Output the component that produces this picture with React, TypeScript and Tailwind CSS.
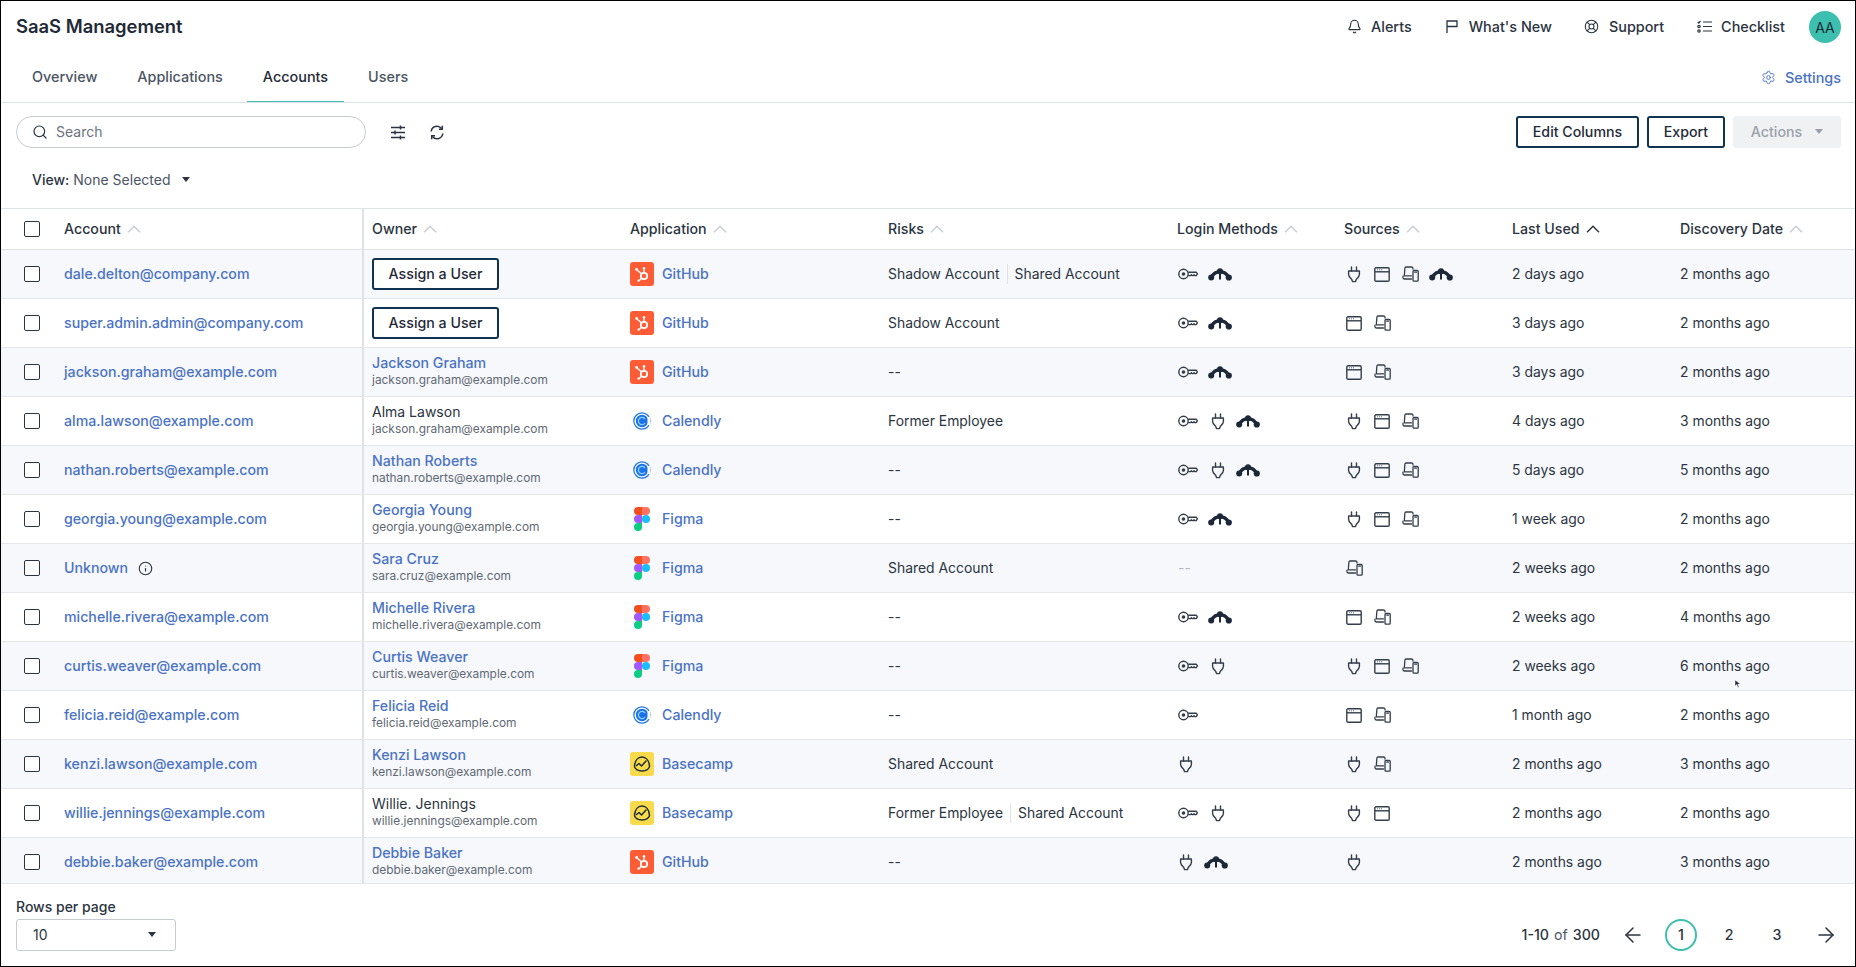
import React from 'react';
import { Bell, LifeBuoy, Settings, Search, ArrowLeft, ArrowRight, Info } from 'lucide-react';

type IconName = 'key' | 'okta' | 'plug' | 'browser' | 'devices';
type AppName = 'GitHub' | 'Calendly' | 'Figma' | 'Basecamp';

interface Row {
  account: string;
  owner?: string;
  ownerEmail?: string;
  ownerLink?: boolean;
  app: AppName;
  risks: string[];
  login: IconName[];
  sources: IconName[];
  lastUsed: string;
  discovery: string;
}

const rows: Row[] = [
  { account: 'dale.delton@company.com', app: 'GitHub', risks: ['Shadow Account', 'Shared Account'], login: ['key', 'okta'], sources: ['plug', 'browser', 'devices', 'okta'], lastUsed: '2 days ago', discovery: '2 months ago' },
  { account: 'super.admin.admin@company.com', app: 'GitHub', risks: ['Shadow Account'], login: ['key', 'okta'], sources: ['browser', 'devices'], lastUsed: '3 days ago', discovery: '2 months ago' },
  { account: 'jackson.graham@example.com', owner: 'Jackson Graham', ownerEmail: 'jackson.graham@example.com', ownerLink: true, app: 'GitHub', risks: [], login: ['key', 'okta'], sources: ['browser', 'devices'], lastUsed: '3 days ago', discovery: '2 months ago' },
  { account: 'alma.lawson@example.com', owner: 'Alma Lawson', ownerEmail: 'jackson.graham@example.com', app: 'Calendly', risks: ['Former Employee'], login: ['key', 'plug', 'okta'], sources: ['plug', 'browser', 'devices'], lastUsed: '4 days ago', discovery: '3 months ago' },
  { account: 'nathan.roberts@example.com', owner: 'Nathan Roberts', ownerEmail: 'nathan.roberts@example.com', ownerLink: true, app: 'Calendly', risks: [], login: ['key', 'plug', 'okta'], sources: ['plug', 'browser', 'devices'], lastUsed: '5 days ago', discovery: '5 months ago' },
  { account: 'georgia.young@example.com', owner: 'Georgia Young', ownerEmail: 'georgia.young@example.com', ownerLink: true, app: 'Figma', risks: [], login: ['key', 'okta'], sources: ['plug', 'browser', 'devices'], lastUsed: '1 week ago', discovery: '2 months ago' },
  { account: 'Unknown', owner: 'Sara Cruz', ownerEmail: 'sara.cruz@example.com', ownerLink: true, app: 'Figma', risks: ['Shared Account'], login: [], sources: ['devices'], lastUsed: '2 weeks ago', discovery: '2 months ago' },
  { account: 'michelle.rivera@example.com', owner: 'Michelle Rivera', ownerEmail: 'michelle.rivera@example.com', ownerLink: true, app: 'Figma', risks: [], login: ['key', 'okta'], sources: ['browser', 'devices'], lastUsed: '2 weeks ago', discovery: '4 months ago' },
  { account: 'curtis.weaver@example.com', owner: 'Curtis Weaver', ownerEmail: 'curtis.weaver@example.com', ownerLink: true, app: 'Figma', risks: [], login: ['key', 'plug'], sources: ['plug', 'browser', 'devices'], lastUsed: '2 weeks ago', discovery: '6 months ago' },
  { account: 'felicia.reid@example.com', owner: 'Felicia Reid', ownerEmail: 'felicia.reid@example.com', ownerLink: true, app: 'Calendly', risks: [], login: ['key'], sources: ['browser', 'devices'], lastUsed: '1 month ago', discovery: '2 months ago' },
  { account: 'kenzi.lawson@example.com', owner: 'Kenzi Lawson', ownerEmail: 'kenzi.lawson@example.com', ownerLink: true, app: 'Basecamp', risks: ['Shared Account'], login: ['plug'], sources: ['plug', 'devices'], lastUsed: '2 months ago', discovery: '3 months ago' },
  { account: 'willie.jennings@example.com', owner: 'Willie. Jennings', ownerEmail: 'willie.jennings@example.com', app: 'Basecamp', risks: ['Former Employee', 'Shared Account'], login: ['key', 'plug'], sources: ['plug', 'browser'], lastUsed: '2 months ago', discovery: '2 months ago' },
  { account: 'debbie.baker@example.com', owner: 'Debbie Baker', ownerEmail: 'debbie.baker@example.com', ownerLink: true, app: 'GitHub', risks: [], login: ['plug', 'okta'], sources: ['plug'], lastUsed: '2 months ago', discovery: '3 months ago' },
];

const gridCols = 'grid grid-cols-[63px_298px_268px_258px_289px_167px_168px_168px_1fr]';

const KeyIcon = () => (
  <svg width="20" height="12" viewBox="0 0 20 12" fill="none" stroke="#343d4a" strokeWidth="1.4" strokeLinejoin="round">
    <circle cx="5.5" cy="6" r="4.7" />
    <circle cx="5.5" cy="6" r="1.1" fill="#343d4a" />
    <path d="M10.200 4.200h8l1.200 1.600-1.200 1.800h-1.400l-.8-.9-.8.9h-1l-.8-.9-.8.9h-2.400" />
  </svg>
);

const OktaIcon = () => (
  <svg width="24" height="13" viewBox="0 0 24 13" className="-ml-[2px]" fill="#1c2738" stroke="#1c2738">
    <path d="M3.500 9C5.500 5.500 8.500 3.800 12 3.800S18.500 5.500 20.500 9" fill="none" strokeWidth="3.400" />
    <path d="M12 4v7.500" strokeWidth="2" />
    <circle cx="3.200" cy="9.500" r="3" stroke="none" />
    <circle cx="20.800" cy="9.500" r="3.100" stroke="none" />
    <circle cx="12" cy="3.200" r="3" stroke="none" />
  </svg>
);

const PlugIcon = () => (
  <svg width="16" height="17" viewBox="0 0 16 17" fill="none" stroke="#343d4a" strokeWidth="1.4" strokeLinejoin="round" strokeLinecap="round">
    <path d="M5.500 1v4M10.500 1v4" />
    <path d="M2.600 5h10.800v3.500c0 2.200-2 3.600-3.200 5l-.7 2.100H6.500l-.7-2.100C4.600 12.100 2.600 10.700 2.600 8.500z" />
  </svg>
);

const BrowserIcon = () => (
  <svg width="16" height="15" viewBox="0 0 16 15" fill="none" stroke="#343d4a" strokeWidth="1.4">
    <rect x="0.8" y="0.800" width="14.400" height="13.400" rx="1.200" />
    <path d="M1 4.800h14" />
    <path d="M3 2.800h.8M5 2.800h.8M7 2.800h.8" strokeWidth="1" />
  </svg>
);

const DevicesIcon = () => (
  <svg width="17" height="16" viewBox="0 0 17 16" fill="none" stroke="#343d4a" strokeWidth="1.3" strokeLinejoin="round" strokeLinecap="round">
    <path d="M11 3C11 1.500 10.500 1 9.500 1H4C3.300 1 3 1.400 2.900 2L2.300 9.800H9.500" />
    <path d="M1 10.200C.8 12 1.200 13 2.200 13H9.500" />
    <rect x="11" y="4.500" width="5.200" height="10.700" rx="1" />
    <path d="M12.800 6.200h1.600" />
  </svg>
);

const icons: Record<IconName, React.FC> = {
  key: KeyIcon,
  okta: OktaIcon,
  plug: PlugIcon,
  browser: BrowserIcon,
  devices: DevicesIcon,
};

const AppLogo = ({ app }: { app: AppName }) => {
  if (app === 'GitHub') {
    return (
      <div className="flex h-6 w-6 items-center justify-center rounded-[3px] bg-[#ff5c35]">
        <svg width="18" height="18" viewBox="0 0 18 18" fill="none" stroke="white">
          <circle cx="11" cy="11" r="3.200" strokeWidth="1.800" />
          <path d="M11 7.500V4M8.500 8.700 4 5M8.600 13.200l-2.400 2.300" strokeWidth="1.400" />
          <circle cx="3.600" cy="4.400" r="1.400" fill="white" stroke="none" />
          <circle cx="11" cy="3.200" r="1.200" fill="white" stroke="none" />
          <circle cx="5.600" cy="15.600" r="1.200" fill="white" stroke="none" />
        </svg>
      </div>
    );
  }
  if (app === 'Calendly') {
    return (
      <div className="flex h-6 w-6 items-center justify-center">
        <svg width="18" height="18" viewBox="0 0 18 18" fill="none">
          <circle cx="9" cy="9" r="8.200" stroke="#1a73e8" strokeWidth="1.200" />
          <circle cx="9" cy="9" r="6.200" fill="#1a73e8" />
          <path d="M12 7a3.600 3.600 0 1 0 0 4" stroke="#8fd0f5" strokeWidth="1.300" />
          <path d="M14.500 5.500 17.500 4v10l-3-1.500z" fill="white" />
        </svg>
      </div>
    );
  }
  if (app === 'Figma') {
    return (
      <div className="flex h-6 w-6 items-center justify-center">
        <svg width="16" height="24" viewBox="0 0 16 24">
          <path d="M8 0H4a4 4 0 0 0 0 8h4z" fill="#f24e1e" />
          <path d="M8 0h4a4 4 0 0 1 0 8H8z" fill="#ff7262" />
          <path d="M8 8H4a4 4 0 0 0 0 8h4z" fill="#a259ff" />
          <circle cx="12" cy="12" r="4" fill="#1abcfe" />
          <path d="M4 16h4v4a4 4 0 1 1-4-4z" fill="#0acf83" />
        </svg>
      </div>
    );
  }
  return (
    <div className="flex h-6 w-6 items-center justify-center rounded-[3px] bg-[#f8da4a]">
      <svg width="18" height="16" viewBox="0 0 18 16" fill="none" stroke="#1d2d35" strokeWidth="1.500" strokeLinecap="round" strokeLinejoin="round">
        <path d="M1.500 10C2 4.500 5 1 9 1s7 3.500 7.500 9c.2 3-3.500 5-7.500 5s-7.700-2-7.500-5z" />
        <path d="M3.500 9.500 6 7.500l2.500 2.500L13 5" />
      </svg>
    </div>
  );
};

const SortArrow = ({ active }: { active?: boolean }) => (
  <svg width="14" height="8" viewBox="0 0 14 8" fill="none" stroke={active ? '#2b3440' : '#c9cdd3'} strokeWidth="1.400">
    <path d="M1 7.300 7 1.300l6 6" />
  </svg>
);

const Caret = ({ color = '#2b3440' }: { color?: string }) => (
  <svg width="8" height="5" viewBox="0 0 8 5" fill={color}>
    <path d="M0 0h8L4 5z" />
  </svg>
);

const TopLink = ({ icon, label }: { icon: React.ReactNode; label: string }) => (
  <div className="flex items-center gap-[9px] pb-px text-[14.4px] font-medium text-[#2b3440]">
    <span className="flex w-4 items-center justify-center">{icon}</span>
    {label}
  </div>
);

const HeaderCell = ({ label, active, className = '' }: { label: string; active?: boolean; className?: string }) => (
  <div className={`flex items-center gap-[6px] pb-px text-[14.2px] font-medium text-[#2b3440] ${className}`}>
    {label}
    <SortArrow active={active} />
  </div>
);

const Checkbox = () => <div className="h-4 w-4 rounded-[2px] border border-[#2b3440] bg-white" />;

const OutlineButton = ({ label, className = '' }: { label: string; className?: string }) => (
  <button className={`flex h-8 items-center justify-center rounded-[3px] border-2 border-[#0f3350] bg-white pb-px text-[14.2px] font-medium text-[#1f2a37] ${className}`}>
    {label}
  </button>
);

export default function App() {
  return (
    <div className="relative flex h-[967px] w-[1856px] flex-col overflow-hidden border border-black bg-white font-['Inter',sans-serif] text-[#2b3440]">
      {/* Top bar */}
      <div className="flex h-[52px] items-center justify-between pl-[15px] pr-[14px]">
        <h1 className="text-[18.4px] font-semibold text-[#1f2a37]">SaaS Management</h1>
        <div className="flex items-center">
          <TopLink icon={<Bell size={15} strokeWidth={1.8} />} label="Alerts" />
          <div className="ml-[32px]">
            <TopLink
              icon={
                <svg width="12" height="13" viewBox="0 0 12 13" fill="none" stroke="#2b3440" strokeWidth="1.300">
                  <path d="M1 13V1h10v5.500H1" />
                </svg>
              }
              label="What's New"
            />
          </div>
          <div className="ml-[32px]">
            <TopLink icon={<LifeBuoy size={15} strokeWidth={1.7} />} label="Support" />
          </div>
          <div className="ml-[32px]">
            <TopLink
              icon={
                <svg width="15" height="13" viewBox="0 0 15 13" fill="none" stroke="#2b3440" strokeWidth="1.200">
                  <path d="M6 2h9M6 6.500h9M6 11h9" />
                  <path d="M.8 2l1 1L3.500 1" />
                  <circle cx="2" cy="6.500" r="1.200" />
                  <circle cx="2" cy="11" r="1.200" />
                </svg>
              }
              label="Checklist"
            />
          </div>
          <div className="ml-[24px] flex h-8 w-8 items-center justify-center rounded-full bg-[#3cbfae] text-[14px] text-[#1f2a37]">AA</div>
        </div>
      </div>

      {/* Tabs */}
      <div className="flex h-[50px] items-stretch justify-between border-b border-[#dfe2e6] pl-[15px] pr-[14px]">
        <div className="flex gap-2">
          {['Overview', 'Applications', 'Accounts', 'Users'].map((t) => (
            <div
              key={t}
              className={
                t === 'Accounts'
                  ? 'flex items-center border-b border-[#3cbfae] px-4 pb-px text-[14.4px] font-medium text-[#1f2a37]'
                  : 'flex items-center px-4 pb-px text-[14.4px] font-medium text-[#4b5563]'
              }
            >
              {t}
            </div>
          ))}
        </div>
        <div className="flex items-center gap-[9px] text-[14.4px] font-medium text-[#4a73c4]">
          <Settings size={15} strokeWidth={1.5} />
          Settings
        </div>
      </div>

      {/* Toolbar */}
      <div className="flex items-center justify-between pl-[15px] pr-[14px] pt-[13px]">
        <div className="flex items-center">
          <div className="flex h-8 w-[350px] items-center gap-2 rounded-full border border-[#c8ccd2] pb-px pl-[15px] text-[14px] text-[#6b7280]">
            <Search size={16} strokeWidth={1.8} className="text-[#2b3440]" />
            Search
          </div>
          <svg className="ml-[24px]" width="16" height="15" viewBox="0 0 16 15" fill="none" stroke="#2b3440" strokeWidth="1.500">
            <path d="M1 2.500h14M1 7.500h14M1 12.500h14" />
            <path d="M10.500 .500v4M5 5.500v4M10.500 10.500v4" />
          </svg>
          <svg className="ml-[24px]" width="14" height="15" viewBox="0 0 14 15" fill="none" stroke="#2b3440" strokeWidth="1.500">
            <path d="M1.200 6.500A5.800 5.800 0 0 1 11.500 3.500" />
            <path d="M12.800 8.500A5.800 5.800 0 0 1 2.500 11.500" />
            <path d="M12.300 .800v3.400H9M1.700 14.200v-3.400H5" />
          </svg>
        </div>
        <div className="flex items-center gap-2">
          <OutlineButton label="Edit Columns" className="w-[123px]" />
          <OutlineButton label="Export" className="w-[78px]" />
          <div className="flex h-8 w-[108px] items-center justify-center gap-[13px] rounded-[3px] bg-[#f0f1f3] pb-px text-[14.2px] font-medium text-[#9aa0a8]">
            Actions
            <Caret color="#9aa0a8" />
          </div>
        </div>
      </div>

      <div className="mt-[19px] flex h-6 items-center pl-[31px] text-[14px]">
        <span className="font-medium">View:</span>
        <span className="ml-1 text-[#4b5563]">None Selected</span>
        <span className="ml-[12px]"><Caret /></span>
      </div>

      {/* Table */}
      <div className="mt-[17px] border-t border-[#dfe2e6]">
        <div className={`${gridCols} h-[41px] border-b border-[#dfe2e6]`}>
          <div className="flex items-center pl-[23px]"><Checkbox /></div>
          <HeaderCell label="Account" />
          <HeaderCell label="Owner" className="border-l-2 border-[#dfe2e6] pl-2" />
          <HeaderCell label="Application" />
          <HeaderCell label="Risks" />
          <HeaderCell label="Login Methods" />
          <HeaderCell label="Sources" />
          <HeaderCell label="Last Used" active />
          <HeaderCell label="Discovery Date" />
        </div>
        {/* the last row is cut off by the scroll area, as in the capture */}
        <div className="h-[634px] overflow-hidden border-b border-[#e4e6ea]">
          {rows.map((r, i) => (
            <div key={r.account} className={`${gridCols} h-[49px] border-b border-[#e4e6ea] text-[13.9px] ${i % 2 === 0 ? 'bg-[#f7f8fc]' : 'bg-white'}`}>
              <div className="flex items-center pl-[23px]"><Checkbox /></div>
              <div className="flex items-center gap-[10px] text-[14.2px] font-medium text-[#4a73c4]">
                {r.account}
                {r.account === 'Unknown' && <Info size={15} strokeWidth={1.8} className="text-[#2b3440]" />}
              </div>
              <div className={`flex flex-col justify-center border-l-2 border-[#dfe2e6] pl-2 ${r.owner ? 'pb-[2px]' : ''}`}>
                {r.owner ? (
                  <>
                    <div className={r.ownerLink ? 'text-[14.2px] font-medium leading-[18px] text-[#4a73c4]' : 'text-[14px] leading-[18px] text-[#2b3440]'}>{r.owner}</div>
                    <div className="text-[11.9px] leading-[16px] text-[#5f6873]">{r.ownerEmail}</div>
                  </>
                ) : (
                  <OutlineButton label="Assign a User" className="w-[127px]" />
                )}
              </div>
              <div className="flex items-center gap-2 text-[14.2px] font-medium text-[#4a73c4]">
                <AppLogo app={r.app} />
                {r.app}
              </div>
              <div className="flex items-center">
                {r.risks.length === 0 && '--'}
                {r.risks.map((risk, j) => (
                  <span key={risk} className={j > 0 ? 'ml-[7px] border-l border-[#dfe2e6] pl-[7px]' : ''}>{risk}</span>
                ))}
              </div>
              <div className="flex items-center gap-3 pl-px">
                {r.login.length === 0 && <span className="text-[#b4b9c0]">--</span>}
                {r.login.map((n) => {
                  const I = icons[n];
                  return <I key={n} />;
                })}
              </div>
              <div className="flex items-center gap-3 pl-[2px]">
                {r.sources.map((n) => {
                  const I = icons[n];
                  return <I key={n} />;
                })}
              </div>
              <div className="flex items-center">{r.lastUsed}</div>
              <div className="flex items-center">{r.discovery}</div>
            </div>
          ))}
        </div>
      </div>

      {/* Footer */}
      <div className="flex flex-1 items-end justify-between pb-[15px] pl-[15px] pr-[17px]">
        <div>
          <div className="mb-[2px] text-[14px] font-medium leading-[20px]">Rows per page</div>
          <div className="flex h-8 w-[160px] items-center justify-between rounded-[3px] border border-[#c8ccd2] pb-px pl-4 pr-[19px] text-[14px]">
            10
            <Caret />
          </div>
        </div>
        <div className="flex h-8 items-center pb-px text-[14.2px]">
          <span className="font-medium">1-10</span>
          <span className="mx-[5px] text-[#4b5563]">of</span>
          <span className="font-medium">300</span>
          <ArrowLeft size={24} strokeWidth={1.5} className="ml-[21px]" />
          <div className="ml-[20px] flex h-8 w-8 items-center justify-center rounded-full border-2 border-[#3cbfae] font-medium">1</div>
          <div className="ml-4 flex h-8 w-8 items-center justify-center font-medium">2</div>
          <div className="ml-4 flex h-8 w-8 items-center justify-center font-medium">3</div>
          <ArrowRight size={24} strokeWidth={1.5} className="ml-[21px]" />
        </div>
      </div>

      {/* mouse pointer left in the capture */}
      <svg className="absolute left-[1733px] top-[678px]" width="8" height="10" viewBox="0 0 8 10" fill="#1c2738" stroke="white" strokeWidth=".5">
        <path d="M1 1l5.500 4H4l1 3-1 .5-1.200-3L1 7z" />
      </svg>
    </div>
  );
}
